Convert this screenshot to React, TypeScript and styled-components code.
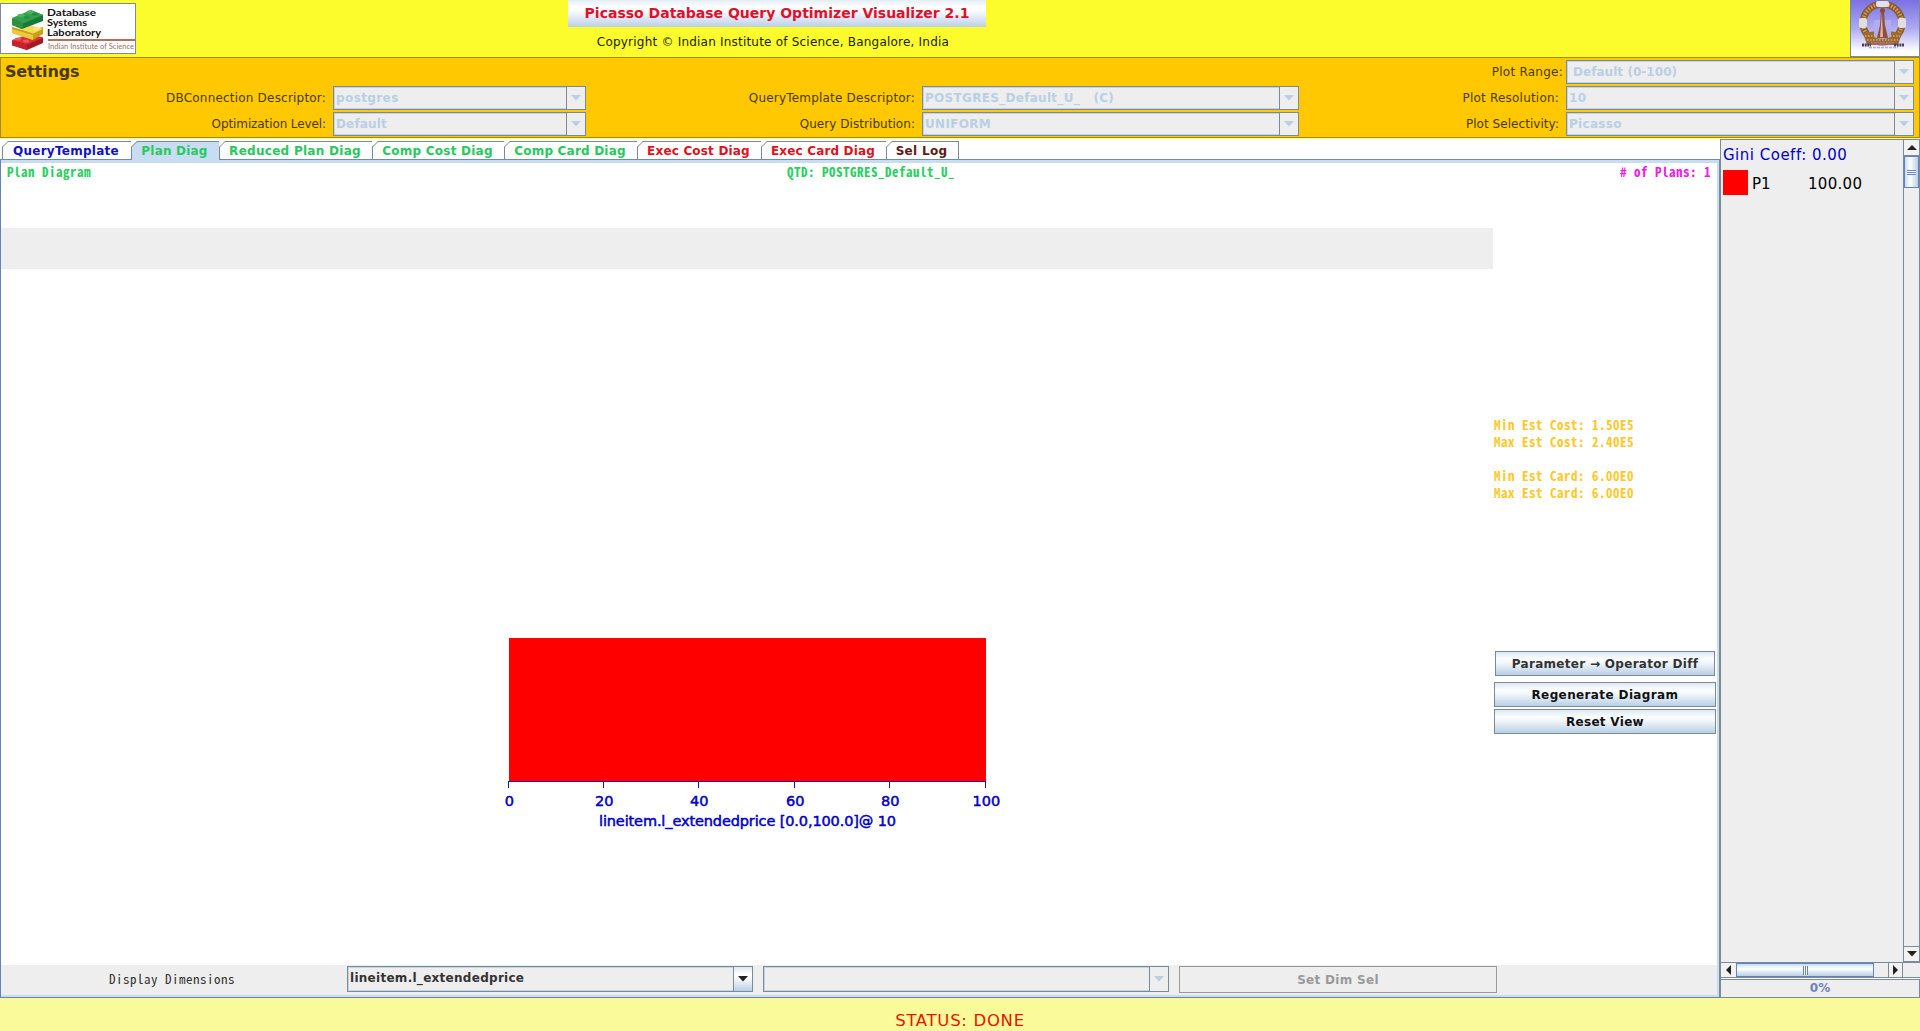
import React from 'react';
import styled, { createGlobalStyle, css } from 'styled-components';

const sans = '"DejaVu Sans", sans-serif';
const mono = '"Noto Sans Mono CJK SC", "DejaVu Sans Mono", monospace';
const steel = '#7a8a99';
const disabledBlue = '#b8cfe5';
const glossy = 'linear-gradient(#dde8f3 0%, #ffffff 30%, #ffffff 42%, #b8cfe5 100%)';

const GlobalStyle = createGlobalStyle`
  * { box-sizing: border-box; }
  body { margin: 0; background: #fff; overflow: hidden; }
`;

const Text = styled.span<{ size?: number; bold?: boolean; color?: string; track?: number; fixed?: boolean; line?: number }>`
  font-family: ${p => (p.fixed ? mono : sans)};
  font-size: ${p => p.size ?? 12}px;
  font-weight: ${p => (p.bold ? 700 : 400)};
  color: ${p => p.color ?? '#333'};
  letter-spacing: ${p => p.track ?? 0}px;
  line-height: ${p => p.line ?? 16}px;
  white-space: pre;
  display: block;
`;

const Window = styled.div`
  width: 1920px;
  height: 1031px;
  display: flex;
  flex-direction: column;
  overflow: hidden;
`;

const Header = styled.header`
  height: 57px;
  background: #fcfc2d;
  display: grid;
  grid-template-columns: 568px 418px 1fr;
`;

const LabLogo = styled.div`
  width: 136px;
  height: 51px;
  margin-top: 3px;
  background: #fff;
  border: 1px solid #7d87a8;
  svg { display: block; }
`;

const TitleBlock = styled.div`
  display: flex;
  flex-direction: column;
  align-items: center;
`;

const TitleButton = styled.div`
  width: 100%;
  height: 27px;
  display: flex;
  justify-content: center;
  padding-top: 5px;
  background: linear-gradient(#e4edf6 0%, #ffffff 25%, #ffffff 35%, #bcd0e8 100%);
  margin-bottom: 7px;
`;

const Emblem = styled.div`
  justify-self: end;
  width: 70px;
  height: 57px;
  border-left: 1px solid ${steel};
  border-right: 1px solid ${steel};
  svg { display: block; }
`;

const SettingsPanel = styled.section`
  height: 81px;
  background: #ffc800;
  border: 1px solid #a48a00;
  display: grid;
  grid-template-columns: 585px 713px 615px;
  padding-top: 2px;
  align-content: start;
`;

const Field = styled.div`
  display: flex;
  justify-content: flex-end;
  height: 26px;
  align-items: flex-start;
`;

const FieldLabel = styled.div<{ gap: number }>`
  padding: 4px ${p => p.gap}px 0 0;
`;

const SettingsTitle = styled.div`
  padding: 4px 0 0 4px;
`;

const ComboBox = styled.div<{ width: number; height?: number }>`
  width: ${p => p.width}px;
  height: ${p => p.height ?? 24}px;
  border: 1px solid ${steel};
  background: #eee;
  display: flex;
  box-shadow: inset 0 0 0 1px #c5d4e4;
`;

const ComboValue = styled.div<{ indent?: number; drop?: number }>`
  flex: 1;
  padding: ${p => p.drop ?? 3}px 0 0 ${p => p.indent ?? 2}px;
`;

const ComboArrow = styled.div<{ active?: boolean }>`
  width: 19px;
  border-left: 1px solid ${steel};
  background: ${p => (p.active ? glossy : '#eee')};
  display: flex;
  align-items: center;
  justify-content: center;
`;

const Workspace = styled.main`
  height: 859px;
  margin-top: 1px;
  display: flex;
  box-shadow: 0 -1px 0 #ffff9a;
`;

const DiagramPane = styled.div`
  width: 1720px;
  display: flex;
  flex-direction: column;
`;

const TabBar = styled.nav`
  height: 20px;
  padding: 2px 0 0 2px;
  display: flex;
`;

const Tab = styled.div<{ width: number; selected?: boolean; first?: boolean }>`
  position: relative;
  width: ${p => p.width}px;
  height: ${p => (p.selected ? 19 : 18)}px;
  border-top: 1px solid ${steel};
  border-right: 1px solid ${steel};
  background: ${p => (p.selected ? '#c8ddf2' : '#fff')};
  display: flex;
  justify-content: center;
  padding: 1px 2px 0 0;
  z-index: 1;
  ${p => p.first && css`border-left: 1px solid ${steel};`}
`;

const TabCorner = styled.svg`
  position: absolute;
  left: -1px;
  top: -1px;
`;

const TabContent = styled.div`
  flex: 1;
  display: flex;
  flex-direction: column;
  border-top: 1px solid #6f8ab8;
  border-left: 1px solid #6382bf;
  border-bottom: 1px solid #6f7fae;
  border-right: 1px solid ${steel};
`;

const TabInset = styled.div`
  flex: 1;
  display: flex;
  flex-direction: column;
  border: solid #c8ddf2;
  border-width: 3px 2px 2px 0;
`;

const Caption = styled.div`
  height: 15px;
  display: grid;
  grid-template-columns: 780px 1fr auto;
  padding: 1px 6px 0 6px;
`;

const DiagramBody = styled.div`
  flex: 1;
  display: flex;
`;

const Canvas = styled.div`
  width: 1492px;
  padding-top: 50px;
`;

const GreyBand = styled.div`
  height: 41px;
  background: #eee;
  margin-bottom: 369px;
`;

const PlanChart = styled.svg`
  display: block;
  margin-left: 491px;
`;

const ActionColumn = styled.aside`
  flex: 1;
  padding-top: 238px;
  display: flex;
  flex-direction: column;
`;

const Stats = styled.div`
  height: 235px;
  padding-left: 1px;
`;

const Button = styled.button<{ width: number; indent?: number; after?: number; muted?: boolean }>`
  width: ${p => p.width}px;
  height: ${p => (p.muted ? 27 : 25)}px;
  margin: 0 0 ${p => p.after ?? 0}px ${p => p.indent ?? 0}px;
  padding: 0;
  border: 1px solid ${p => (p.muted ? '#999' : steel)};
  background: ${p => (p.muted ? '#eee' : 'linear-gradient(#dde8f3 0%, #fbfdff 30%, #f4f8fc 45%, #b8cfe5 100%)')};
  display: flex;
  align-items: center;
  justify-content: center;
`;

const DimensionBar = styled.div`
  height: 30px;
  background: #eee;
  display: flex;
  align-items: flex-start;
  padding-top: 1px;
`;

const DimensionLabel = styled.div`
  width: 346px;
  padding: 5px 0 0 108px;
`;

const Spacer = styled.div<{ width: number }>`
  width: ${p => p.width}px;
`;

const LegendPane = styled.aside`
  width: 200px;
  background: #eee;
  border-left: 1px solid ${steel};
  border-top: 1px solid ${steel};
  display: flex;
  flex-direction: column;
`;

const LegendRow = styled.div`
  height: 822px;
  display: flex;
`;

const Legend = styled.div`
  flex: 1;
  padding: 6px 0 0 2px;
`;

const LegendItem = styled.div`
  display: grid;
  grid-template-columns: 29px 56px auto;
  align-items: center;
  margin-top: 6px;
`;

const LegendText = styled.div`
  padding-top: 2px;
`;

const Swatch = styled.div<{ color: string }>`
  width: 25px;
  height: 25px;
  background: ${p => p.color};
`;

const VScroll = styled.div`
  width: 17px;
  border-left: 1px solid ${steel};
  border-right: 1px solid ${steel};
  display: flex;
  flex-direction: column;
`;

const HScroll = styled.div`
  height: 16px;
  border-top: 1px solid ${steel};
  border-bottom: 1px solid ${steel};
  display: flex;
`;

const ScrollButton = styled.div<{ edge: 'top' | 'bottom' | 'left' | 'right' }>`
  width: 15px;
  height: ${p => (p.edge === 'left' || p.edge === 'right' ? 14 : 16)}px;
  display: flex;
  align-items: center;
  justify-content: center;
  background: #f2f2f2;
  ${p => p.edge === 'top' && css`border-bottom: 1px solid ${steel};`}
  ${p => p.edge === 'bottom' && css`border-top: 1px solid ${steel}; border-bottom: 1px solid ${steel};`}
  ${p => p.edge === 'right' && css`border-left: 1px solid ${steel}; border-right: 1px solid ${steel};`}
`;

const Track = styled.div<{ vertical?: boolean }>`
  flex: 1;
  display: flex;
  flex-direction: ${p => (p.vertical ? 'column' : 'row')};
`;

const Thumb = styled.div<{ vertical?: boolean }>`
  ${p => (p.vertical ? css`height: 32px; width: 15px;` : css`width: 138px; height: 14px;`)}
  border: 1px solid #6382bf;
  background: linear-gradient(${p => (p.vertical ? '90deg' : '180deg')}, #c8ddf2, #ffffff 40%, #b8cfe5);
  display: flex;
  align-items: center;
  justify-content: center;
`;

const Grip = styled.div<{ vertical?: boolean }>`
  ${p => (p.vertical ? css`width: 9px; height: 5px;` : css`width: 5px; height: 9px;`)}
  background: repeating-linear-gradient(${p => (p.vertical ? '180deg' : '90deg')}, #6382bf 0 1px, #ffffff 1px 2px);
`;

const Progress = styled.div`
  flex: 1;
  margin-top: 1px;
  border: 1px solid ${steel};
  border-left: 0;
  box-shadow: 0 -1px 0 #fff;
  display: flex;
  justify-content: center;
`;

const StatusBar = styled.footer`
  flex: 1;
  background: #fafa9b;
  display: flex;
  justify-content: center;
  padding-top: 14px;
`;

type Direction = 'up' | 'down' | 'left' | 'right';
const trianglePaths: Record<Direction, string> = {
  up: 'M0 5L5 0L10 5Z',
  down: 'M0 0H10L5 5.5Z',
  left: 'M5 0V10L0 5Z',
  right: 'M0 0V10L5 5Z',
};

function Triangle({ dir, color = '#222' }: { dir: Direction; color?: string }) {
  const flat = dir === 'up' || dir === 'down';
  return (
    <svg width={flat ? 10 : 5} height={flat ? 6 : 10}>
      <path d={trianglePaths[dir]} fill={color} />
    </svg>
  );
}

function Combo({ value, width, indent, track = 0.3 }: { value: string; width: number; indent?: number; track?: number }) {
  return (
    <ComboBox width={width}>
      <ComboValue indent={indent}><Text bold color={disabledBlue} track={track}>{value}</Text></ComboValue>
      <ComboArrow><Triangle dir="down" color={disabledBlue} /></ComboArrow>
    </ComboBox>
  );
}

interface SettingProps { label: string; value: string; width: number; gap?: number; indent?: number; track?: number; valueTrack?: number }

function Setting({ label, value, width, gap = 7, indent, track = 0.2, valueTrack }: SettingProps) {
  return (
    <Field>
      <FieldLabel gap={gap}><Text color="#4a3a00" track={track}>{label}</Text></FieldLabel>
      <Combo value={value} width={width} indent={indent} track={valueTrack} />
    </Field>
  );
}

function LabLogoArt() {
  return (
    <svg width="134" height="49" viewBox="1 4 134 49">
      <g>
        <path d="M12 41L30 34.500L43 37.500V43L27 50L12 45Z" fill="#a81a22" />
        <path d="M12 40L30 34L43 38L27 44.500Z" fill="#dc3038" />
        <path d="M12 40L27 44.500V50L12 45.500Z" fill="#c4222c" />
        <path d="M12 27L27 31L43 27V34L33 40L12 33Z" fill="#c9a01c" />
        <path d="M17 28L33 33.500L43 29L29 25Z" fill="#f4dc58" />
        <path d="M12 29L33 35V40L12 33Z" fill="#eec83c" />
        <path d="M12 19L33 11L43 15V21L22 29L12 25Z" fill="#18783a" />
        <path d="M12 18L31 10L43 15L23 23.500Z" fill="#35a04c" />
        <path d="M12 18L23 23V29L12 25Z" fill="#2a9044" />
        <ellipse cx="21" cy="15.500" rx="3.500" ry="1.700" fill="#4cb560" />
        <ellipse cx="30" cy="12" rx="3.500" ry="1.700" fill="#4cb560" />
        <ellipse cx="27" cy="17.500" rx="3" ry="1.500" fill="#259044" />
        <ellipse cx="35" cy="14" rx="3" ry="1.500" fill="#259044" />
        <ellipse cx="36" cy="29" rx="3" ry="1.300" fill="#fbe87c" />
        <ellipse cx="18" cy="39" rx="3" ry="1.500" fill="#ee5a5c" />
        <ellipse cx="26" cy="41" rx="3" ry="1.500" fill="#ee5a5c" />
      </g>
      <g fontFamily="Lato, sans-serif" fontSize="10" fontWeight="700" fill="#111">
        <text x="47" y="16" textLength="49" lengthAdjust="spacingAndGlyphs">Database</text>
        <text x="47" y="26" textLength="40" lengthAdjust="spacingAndGlyphs">Systems</text>
        <text x="47" y="36" textLength="54" lengthAdjust="spacingAndGlyphs">Laboratory</text>
      </g>
      <rect x="48" y="39" width="87" height="2" fill="#a9745f" />
      <text x="48" y="48.500" fontFamily="Lato, sans-serif" fontSize="7.500" fill="#9a7264" textLength="86" lengthAdjust="spacingAndGlyphs">Indian Institute of Science</text>
    </svg>
  );
}

function EmblemArt() {
  return (
    <svg width="68" height="57">
      <defs>
        <linearGradient id="sky" x1="0" y1="0" x2="0" y2="1">
          <stop offset="0" stopColor="#7a70e2" />
          <stop offset=".5" stopColor="#aeaaf2" />
          <stop offset=".9" stopColor="#fff" />
        </linearGradient>
      </defs>
      <rect width="68" height="57" fill="url(#sky)" />
      <ellipse cx="31.500" cy="23" rx="19.500" ry="19" fill="none" stroke="#8a5c28" strokeWidth="7" />
      <ellipse cx="31.500" cy="23" rx="19.500" ry="19" fill="none" stroke="#c89a60" strokeWidth="4" strokeDasharray="1.500 1.500" />
      <path d="M12 33Q31 29 51 33L47 45H16Z" fill="#9a6a30" />
      <path d="M23 20H40V37Q31 41 23 37Z" fill="#b2acf0" />
      <path d="M14 36H24M39 36H49M16 40H47M20 43H43" stroke="#d8a868" strokeDasharray="1.500 1.500" strokeWidth="1.500" />
      <rect x="25" y="1" width="13" height="6" rx="2" fill="#e2e2e6" />
      <rect x="8" y="18" width="8" height="10" rx="2" fill="#dedfe0" />
      <rect x="47" y="18" width="8" height="10" rx="2" fill="#dedfe0" />
      <path d="M30 12H33L34 25L37 38H26L29 25Z" fill="#8c5040" />
      <path d="M31 13L32 37H29Z" fill="#e6b49a" />
      <circle cx="31.500" cy="10.500" r="2.500" fill="#8c4a30" />
      <path d="M11 45H20M43 45H53" stroke="#4a3c60" strokeWidth="3" strokeDasharray="2 .7" />
      <path d="M20 43.500H43" stroke="#9a6a78" strokeWidth="2" />
      <path d="M18 47.500H47" stroke="#b4a8e0" strokeWidth="1.500" strokeDasharray="3 1" />
      <path d="M0 56.500H68" stroke="#7a8a99" />
    </svg>
  );
}

const tabs = [
  { label: 'QueryTemplate', width: 130, color: '#1010c8', track: 0.27 },
  { label: 'Plan Diag', width: 88, color: '#28c860', track: 0.2, selected: true },
  { label: 'Reduced Plan Diag', width: 153, color: '#28c860', track: 0.28 },
  { label: 'Comp Cost Diag', width: 132, color: '#28c860', track: 0.24 },
  { label: 'Comp Card Diag', width: 133, color: '#28c860', track: 0.2 },
  { label: 'Exec Cost Diag', width: 124, color: '#e01020', track: 0.18 },
  { label: 'Exec Card Diag', width: 125, color: '#e01020', track: 0.16 },
  { label: 'Sel Log', width: 72, color: '#601818', track: 0.3 },
];

const ticks = [0, 20, 40, 60, 80, 100];
const stats = ['Min Est Cost: 1.50E5', 'Max Est Cost: 2.40E5', ' ', 'Min Est Card: 6.00E0', 'Max Est Card: 6.00E0'];

function Chart() {
  const left = 17;
  const span = 477;
  return (
    <PlanChart width="520" height="200">
      <rect x={left} y="0" width={span} height="143" fill="#ff0000" />
      <path d={`M${left - 1} 143.500H${left + span}`} stroke="#5a008c" />
      {ticks.map(t => {
        const x = Math.round(left - 0.5 + (span * t) / 100) - 0.5;
        return (
          <g key={t}>
            <path d={`M${x} 143V150`} stroke="#1818a8" />
            <text x={x + 0.8} y="167.500" textAnchor="middle" fontFamily={sans} fontSize="14.500" fill="#0000c8" stroke="#0000c8" strokeWidth=".5">{t}</text>
          </g>
        );
      })}
      <text x="107" y="187.500" fontFamily={sans} fontSize="14.500" fill="#0000c8" stroke="#0000c8" strokeWidth=".5" textLength="297">lineitem.l_extendedprice [0.0,100.0]@ 10</text>
    </PlanChart>
  );
}

export default function App() {
  return (
    <Window>
      <GlobalStyle />
      <Header>
        <LabLogo><LabLogoArt /></LabLogo>
        <TitleBlock>
          <TitleButton><Text size={14} bold color="#e0102d">Picasso Database Query Optimizer Visualizer 2.1</Text></TitleButton>
          <Text color="#222200" track={0.21}>{'Copyright © Indian Institute of Science, Bangalore, India  '}</Text>
        </TitleBlock>
        <Emblem><EmblemArt /></Emblem>
      </Header>

      <SettingsPanel>
        <SettingsTitle><Text size={16} bold color="#4a3a00" track={-0.15}>Settings</Text></SettingsTitle>
        <div />
        <Setting label="Plot Range:" value="Default (0-100)" width={348} gap={3} indent={6} track={0.25} valueTrack={0.05} />
        <Setting label="DBConnection Descriptor:" value="postgres" width={253} valueTrack={0.4} />
        <Setting label="QueryTemplate Descriptor:" value="POSTGRES_Default_U_   (C)" width={377} />
        <Setting label="Plot Resolution:" value="10" width={348} />
        <Setting label="Optimization Level:" value="Default" width={253} track={-0.1} valueTrack={0.15} />
        <Setting label="Query Distribution:" value="UNIFORM" width={377} track={0.05} />
        <Setting label="Plot Selectivity:" value="Picasso" width={348} track={0.05} />
      </SettingsPanel>

      <Workspace>
        <DiagramPane>
          <TabBar>
            {tabs.map((tab, i) => (
              <Tab key={tab.label} width={tab.width} selected={tab.selected} first={i === 0}>
                <TabCorner width="7" height="7">
                  <path d="M0 0H6L0 6Z" fill="#fff" />
                  <path d="M.5 7V6L6 .5H7" fill="none" stroke={steel} />
                </TabCorner>
                <Text bold color={tab.color} track={tab.track}>{tab.label}</Text>
              </Tab>
            ))}
          </TabBar>
          <TabContent>
            <TabInset>
              <Caption>
                <Text fixed bold size={13} track={0.5} line={15} color="#28d060">Plan Diagram</Text>
                <Text fixed bold size={13} track={0.5} line={15} color="#28d060">QTD: POSTGRES_Default_U_</Text>
                <Text fixed bold size={13} track={0.5} line={15} color="#f020e0">{'# of Plans: 1'}</Text>
              </Caption>
              <DiagramBody>
                <Canvas>
                  <GreyBand />
                  <Chart />
                </Canvas>
                <ActionColumn>
                  <Stats>
                    {stats.map((line, i) => (
                      <Text key={i} fixed bold size={13} track={0.5} line={17} color="#ffc828">{line}</Text>
                    ))}
                  </Stats>
                  <Button width={220} indent={2} after={6}><Text bold track={0.3}>Parameter → Operator Diff</Text></Button>
                  <Button width={222} indent={1} after={2}><Text bold color="#111" track={0.38}>Regenerate Diagram</Text></Button>
                  <Button width={222} indent={1}><Text bold color="#111" track={0.3}>Reset View</Text></Button>
                </ActionColumn>
              </DiagramBody>
              <DimensionBar>
                <DimensionLabel><Text fixed size={13} track={0.5}>Display Dimensions</Text></DimensionLabel>
                <ComboBox width={406} height={26}>
                  <ComboValue><Text bold track={0.28}>lineitem.l_extendedprice</Text></ComboValue>
                  <ComboArrow active><Triangle dir="down" /></ComboArrow>
                </ComboBox>
                <Spacer width={10} />
                <ComboBox width={406} height={26}>
                  <ComboValue />
                  <ComboArrow><Triangle dir="down" color={disabledBlue} /></ComboArrow>
                </ComboBox>
                <Spacer width={10} />
                <Button width={318} muted><Text bold color="#999" track={0.3}>Set Dim Sel</Text></Button>
              </DimensionBar>
            </TabInset>
          </TabContent>
        </DiagramPane>

        <LegendPane>
          <LegendRow>
            <Legend>
              <Text size={15} track={0.5} line={18} color="#0000c8">Gini Coeff: 0.00</Text>
              <LegendItem>
                <Swatch color="#ff0000" />
                <LegendText><Text size={15} color="#000">P1</Text></LegendText>
                <LegendText><Text size={15} track={0.3} color="#000">100.00</Text></LegendText>
              </LegendItem>
            </Legend>
            <VScroll>
              <ScrollButton edge="top"><Triangle dir="up" /></ScrollButton>
              <Track vertical><Thumb vertical><Grip vertical /></Thumb></Track>
              <ScrollButton edge="bottom"><Triangle dir="down" /></ScrollButton>
            </VScroll>
          </LegendRow>
          <HScroll>
            <ScrollButton edge="left"><Triangle dir="left" /></ScrollButton>
            <Track><Thumb><Grip /></Thumb></Track>
            <ScrollButton edge="right"><Triangle dir="right" /></ScrollButton>
            <Spacer width={17} />
          </HScroll>
          <Progress><Text bold color="#6a7fc0">0%</Text></Progress>
        </LegendPane>
      </Workspace>

      <StatusBar><Text size={16.5} track={0.7} color="#e81400" line={18}>STATUS: DONE</Text></StatusBar>
    </Window>
  );
}
